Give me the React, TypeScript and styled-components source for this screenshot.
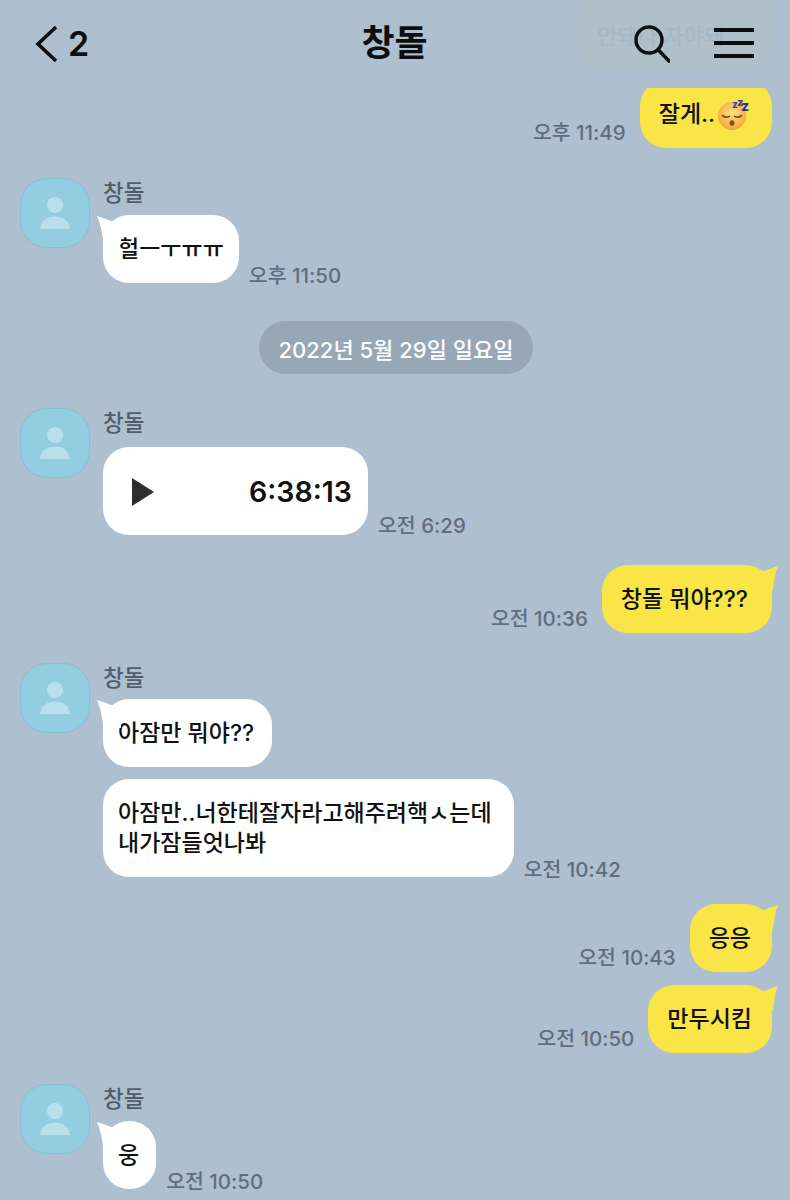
import React from 'react';
import styled, { createGlobalStyle } from 'styled-components';

const GlobalStyle = createGlobalStyle`
  html, body {
    margin: 0;
    padding: 0;
    background: #aebfcf;
  }
  body {
    font-family: 'Inter', 'Noto Sans CJK KR', sans-serif;
    color: #111;
  }
`;

const Screen = styled.div`
  width: 790px;
  height: 1200px;
  overflow: hidden;
  background: #aebfcf;
`;

const Header = styled.header`
  position: relative;
  z-index: 1;
  height: 88px;
  padding: 0 36px 0 35px;
  box-sizing: border-box;
  display: grid;
  grid-template-columns: 1fr auto 1fr;
  align-items: center;
  background: #aebfcf;
`;

const Notice = styled.div`
  position: absolute;
  right: 18px;
  top: -10px;
  width: 195px;
  height: 77px;
  box-sizing: border-box;
  padding: 10px 0 0 20px;
  display: flex;
  align-items: center;
  border-radius: 24px;
  background: #afc0c9;
  color: #a6b8c5;
  font-size: 22px;
  font-weight: 500;
  white-space: nowrap;
  overflow: hidden;
`;

const BackLink = styled.div`
  display: flex;
  align-items: center;
  gap: 9px;
  height: 40px;
  margin-top: -1px;
  position: relative;
`;

const UnreadCount = styled.span`
  font-size: 34px;
  font-weight: 600;
  line-height: 40px;
  color: #0c0f12;
`;

const Title = styled.h1`
  margin: -3px 0 0;
  position: relative;
  font-size: 36px;
  font-weight: 700;
  line-height: 44px;
  color: #0c0f12;
`;

const HeaderActions = styled.div`
  display: flex;
  justify-content: flex-end;
  align-items: center;
  gap: 44px;
  position: relative;
`;

const MenuIcon = styled.div`
  width: 40px;
  height: 30px;
  margin-top: -3px;
  display: flex;
  flex-direction: column;
  justify-content: space-between;

  span {
    display: block;
    height: 4px;
    background: #0c0f12;
  }
`;

const Thread = styled.main`
  margin-top: -8px;
  padding: 0 18px 0 20px;
  display: flex;
  flex-direction: column;
`;

const Outgoing = styled.div<{ $top: number }>`
  margin-top: ${(p) => p.$top}px;
  display: flex;
  justify-content: flex-end;
  align-items: flex-end;
  gap: 14px;
`;

const Incoming = styled.div<{ $top: number }>`
  margin-top: ${(p) => p.$top}px;
  display: flex;
  align-items: flex-start;
  gap: 13px;
`;

const Avatar = styled.div`
  width: 70px;
  height: 70px;
  flex: none;
  box-sizing: border-box;
  border-radius: 27px;
  border: 1px solid #88bfd3;
  background: #93cde1;
  display: flex;
  align-items: center;
  justify-content: center;
`;

const IncomingBody = styled.div`
  display: flex;
  flex-direction: column;
`;

const Name = styled.div<{ $height: number }>`
  height: ${(p) => p.$height}px;
  font-size: 22.5px;
  font-weight: 500;
  line-height: 30px;
  color: #4e5e6e;
`;

const BubbleRow = styled.div<{ $top?: number }>`
  margin-top: ${(p) => p.$top ?? 0}px;
  display: flex;
  align-items: flex-end;
  gap: 10px;
`;

const Bubble = styled.div<{ $mine?: boolean; $tail?: boolean; $endPad?: number }>`
  position: relative;
  height: max-content;
  padding: 19px ${(p) => p.$endPad ?? (p.$mine ? 22 : 17)}px 19px ${(p) => (p.$mine ? 19 : 15)}px;
  border-radius: 26px;
  font-size: 23px;
  font-weight: 500;
  line-height: 30px;
  white-space: nowrap;
  color: #111;
  background: ${(p) => (p.$mine ? '#f9e546' : '#ffffff')};

  &::before {
    content: '';
    display: ${(p) => (p.$tail ? 'block' : 'none')};
    position: absolute;
    top: 1px;
    width: 24px;
    height: 28px;
    background: inherit;
    ${(p) =>
      p.$mine
        ? `right: -6px; clip-path: path('M24 0 C20 1 15 3 10 5 L0 5 L0 28 L19 24 C20 15 21 7 24 0 Z');`
        : `left: -6px; clip-path: path('M0 0 C4 1 9 3 14 5 L24 5 L24 28 L6 24 C5 15 3 7 0 0 Z');`}
  }
`;

const PlayerBubble = styled(Bubble)`
  width: 265px;
  height: 88px;
  box-sizing: border-box;
  padding: 1px 16px 0 28px;
  display: flex;
  align-items: center;
  justify-content: space-between;
`;

const Duration = styled.span`
  font-size: 28.5px;
  font-weight: 600;
`;

const Time = styled.span<{ $bottom?: number }>`
  margin-bottom: ${(p) => p.$bottom ?? -3}px;
  font-size: 20.5px;
  font-weight: 500;
  line-height: 20px;
  white-space: nowrap;
  color: #5e6e7e;
`;

const DateChip = styled.div`
  align-self: center;
  margin: 38px 0 34px 0;
  height: 53px;
  padding: 0 20px;
  display: flex;
  align-items: center;
  border-radius: 27px;
  background: #97a7b6;
  color: #fff;
  font-size: 22px;
  font-weight: 500;
  white-space: nowrap;
`;

const EmojiIcon = styled.svg`
  display: inline-block;
  vertical-align: middle;
  margin: -8px -6px -6px 3px;
  overflow: visible;
`;

const ProfileIcon = () => (
  <svg width="30" height="32" viewBox="0 0 30 32">
    <circle cx="15" cy="8" r="8" fill="#b9dfec" />
    <path d="M0 32 C1 23 8 19.5 15 19.5 C22 19.5 29 23 30 32 Z" fill="#b9dfec" />
  </svg>
);

const Contact = ({ nameHeight, children }: { nameHeight: number; children: React.ReactNode }) => (
  <>
    <Avatar>
      <ProfileIcon />
    </Avatar>
    <IncomingBody>
      <Name $height={nameHeight}>창돌</Name>
      {children}
    </IncomingBody>
  </>
);

const App: React.FC = () => (
  <Screen>
    <GlobalStyle />
    <Header>
      <Notice>안돼나 자야돼..</Notice>
      <BackLink>
        <svg width="24" height="38" viewBox="0 0 24 38">
          <path d="M21 2 L3 19 L21 36" fill="none" stroke="#0c0f12" strokeWidth="3.6" />
        </svg>
        <UnreadCount>2</UnreadCount>
      </BackLink>
      <Title>창돌</Title>
      <HeaderActions>
        <svg width="36" height="38" viewBox="0 0 36 38">
          <circle cx="15" cy="15" r="13" fill="none" stroke="#0c0f12" strokeWidth="3.4" />
          <path d="M24.5 25 L35 36" fill="none" stroke="#0c0f12" strokeWidth="3.6" strokeLinecap="round" />
        </svg>
        <MenuIcon>
          <span />
          <span />
          <span />
        </MenuIcon>
      </HeaderActions>
    </Header>

    <Thread>
      <Outgoing $top={0}>
        <Time $bottom={5}>오후 11:49</Time>
        <Bubble $mine $endPad={30}>
          잘게..
          <EmojiIcon width="30" height="30" viewBox="0 0 30 30">
            <defs>
              <radialGradient id="sleepFace" cx="50%" cy="40%" r="60%">
                <stop offset="0%" stopColor="#fde27a" />
                <stop offset="100%" stopColor="#f2a53c" />
              </radialGradient>
            </defs>
            <circle cx="14" cy="16" r="14" fill="url(#sleepFace)" />
            <path d="M4 15 Q8 19 12 16 M16 16 Q20 19 24 15" fill="none" stroke="#5a3a1c" strokeWidth="1.4" />
            <ellipse cx="14" cy="23" rx="2.4" ry="2.8" fill="#8a4a22" />
            <text x="14" y="8" fontSize="10" fontWeight="800" fill="#3b3fb0">z</text>
            <text x="19" y="6" fontSize="11" fontWeight="800" fill="#3b3fb0">z</text>
            <text x="23" y="11" fontSize="14" fontWeight="800" fill="#2b2f9a">z</text>
          </EmojiIcon>
        </Bubble>
      </Outgoing>

      <Incoming $top={30}>
        <Contact nameHeight={37}>
          <BubbleRow>
            <Bubble $tail $endPad={15}>헐ㅡㅜㅠㅠ</Bubble>
            <Time>오후 11:50</Time>
          </BubbleRow>
        </Contact>
      </Incoming>

      <DateChip>2022년 5월 29일 일요일</DateChip>

      <Incoming $top={0}>
        <Contact nameHeight={39}>
          <BubbleRow>
            <PlayerBubble>
              <svg width="24" height="30" viewBox="0 0 24 30">
                <path d="M1 1 L23 15 L1 29 Z" fill="#2e2e2e" />
              </svg>
              <Duration>6:38:13</Duration>
            </PlayerBubble>
            <Time $bottom={-1}>오전 6:29</Time>
          </BubbleRow>
        </Contact>
      </Incoming>

      <Outgoing $top={30}>
        <Time $bottom={4}>오전 10:36</Time>
        <Bubble $mine $tail $endPad={24}>창돌 뭐야???</Bubble>
      </Outgoing>

      <Incoming $top={30}>
        <Contact nameHeight={36}>
          <BubbleRow>
            <Bubble $tail $endPad={18}>아잠만 뭐야??</Bubble>
          </BubbleRow>
          <BubbleRow $top={12}>
            <Bubble $endPad={22}>
              아잠만..너한테잘자라고해주려핵ㅅ는데
              <br />
              내가잠들엇나봐
            </Bubble>
            <Time>오전 10:42</Time>
          </BubbleRow>
        </Contact>
      </Incoming>

      <Outgoing $top={27}>
        <Time $bottom={4}>오전 10:43</Time>
        <Bubble $mine $tail $endPad={21}>응응</Bubble>
      </Outgoing>

      <Outgoing $top={13}>
        <Time $bottom={4}>오전 10:50</Time>
        <Bubble $mine $tail $endPad={20}>만두시킴</Bubble>
      </Outgoing>

      <Incoming $top={31}>
        <Contact nameHeight={37}>
          <BubbleRow>
            <Bubble $tail>웅</Bubble>
            <Time>오전 10:50</Time>
          </BubbleRow>
        </Contact>
      </Incoming>
    </Thread>
  </Screen>
);

export default App;
